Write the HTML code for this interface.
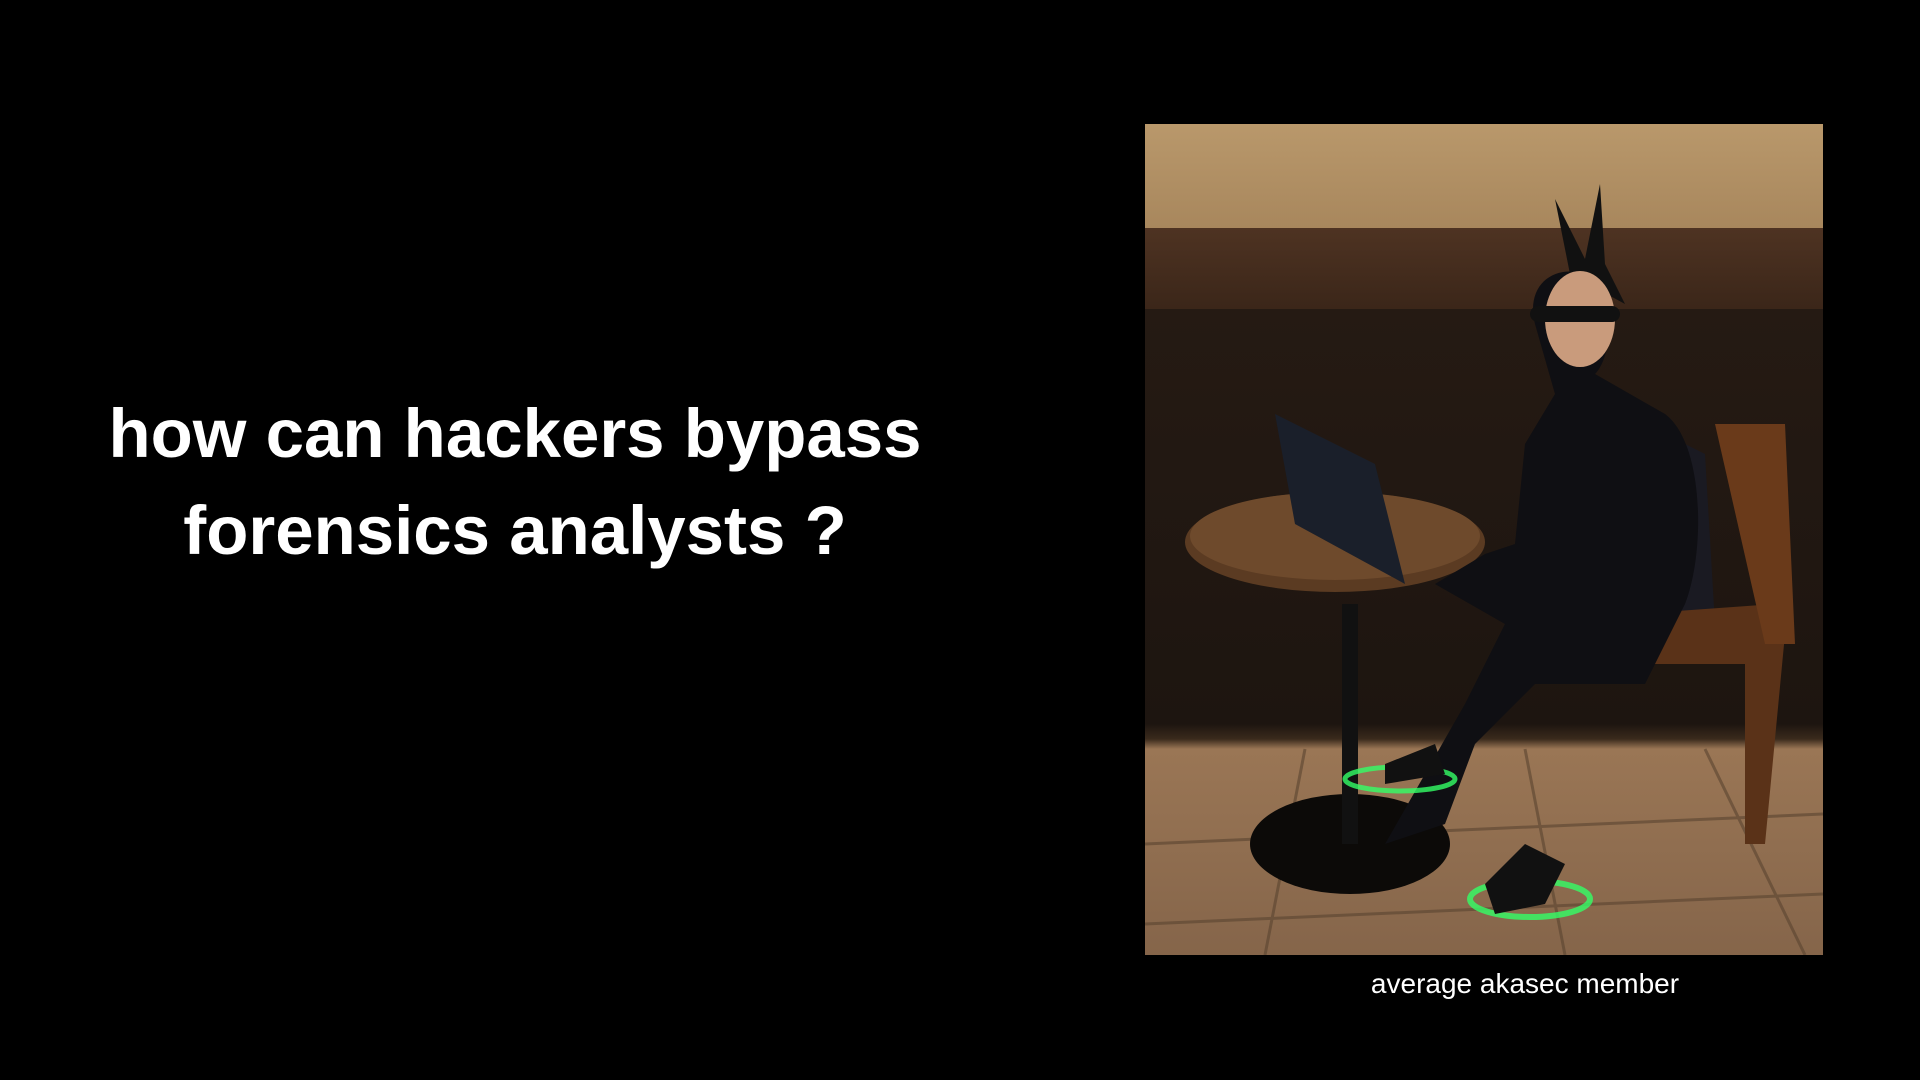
<!DOCTYPE html>
<html><head><meta charset="utf-8"><style>
html,body{margin:0;padding:0;background:#000;width:1920px;height:1080px;overflow:hidden}
.t{position:absolute;left:0;width:1030px;text-align:center;color:#fff;font-family:"Liberation Sans",sans-serif;font-weight:bold;font-size:69px;line-height:97px;top:385px}
.img{position:absolute;left:1145px;top:124px;width:678px;height:831px;overflow:hidden;
background:linear-gradient(#b9986b 0,#a8875d 104px,#4e3322 104px,#3b2619 185px,#251a13 185px,#1d1510 600px,#3a2a1c 615px,#9a7655 625px,#85654a 831px)}
.cap{position:absolute;left:1325px;width:400px;text-align:center;top:968px;color:#fff;font-family:"Liberation Sans",sans-serif;font-size:28px}
</style></head><body>
<div class="t">how can hackers bypass<br>forensics analysts ?</div>
<div class="img">
<svg width="678" height="831" viewBox="0 0 678 831">
<g stroke="#5a4430" stroke-width="3" opacity=".6">
<line x1="0" y1="720" x2="678" y2="690"/><line x1="0" y1="800" x2="678" y2="770"/>
<line x1="160" y1="625" x2="120" y2="831"/><line x1="380" y1="625" x2="420" y2="831"/><line x1="560" y1="625" x2="660" y2="831"/>
</g>
<ellipse cx="205" cy="720" rx="100" ry="50" fill="#0c0a08"/>
<rect x="197" y="480" width="16" height="240" fill="#111"/>
<ellipse cx="190" cy="418" rx="150" ry="50" fill="#5b3b22"/>
<ellipse cx="190" cy="412" rx="145" ry="44" fill="#6e4a2c"/>
<path d="M130 290 L230 340 L260 460 L150 400 Z" fill="#1a1f2a"/>
<path d="M500 300 L560 330 L570 500 L520 500 Z" fill="#1a1a22"/>
<path d="M490 490 L630 480 L640 510 L620 720 L600 720 L600 540 L480 540 Z" fill="#5a3218"/>
<path d="M570 300 L640 300 L650 520 L620 520 Z" fill="#6a3a1a"/>
<path d="M390 200 C380 160 410 140 440 150 C470 160 470 230 450 250 L520 290 C560 320 560 430 540 480 L500 560 L390 560 L330 620 L300 700 L240 720 L320 580 L360 500 L290 460 L340 430 L370 420 L380 320 L410 270 Z" fill="#0f0f13"/>
<path d="M425 150 L410 75 L440 135 L455 60 L460 140 L480 180 Z" fill="#111"/>
<ellipse cx="435" cy="195" rx="35" ry="48" fill="#c99b7c"/>
<rect x="385" y="182" width="90" height="16" rx="8" fill="#111"/>
<ellipse cx="255" cy="655" rx="55" ry="12" fill="none" stroke="#3f6" stroke-width="5" opacity=".8"/>
<ellipse cx="385" cy="775" rx="60" ry="18" fill="none" stroke="#3f6" stroke-width="6" opacity=".8"/>
<path d="M240 640 L290 620 L300 650 L240 660 Z" fill="#111"/>
<path d="M340 760 L380 720 L420 740 L400 780 L350 790 Z" fill="#111"/>
</svg>
</div>
<div class="cap">average akasec member</div>
</body></html>
